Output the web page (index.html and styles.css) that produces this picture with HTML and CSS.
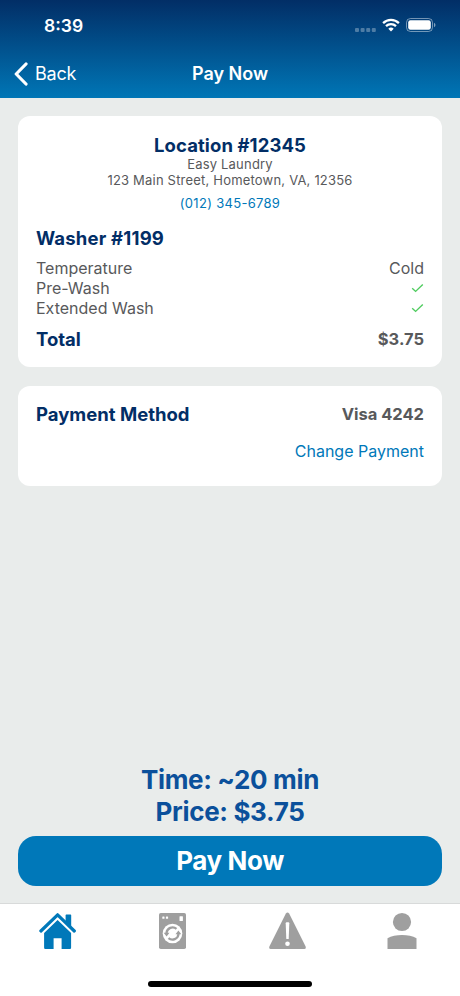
FILE: index.html
```html
<!DOCTYPE html>
<html lang="en">
<head>
  <meta charset="UTF-8">
  <meta name="viewport" content="width=device-width, initial-scale=1">
  <title>Pay Now</title>
  <link rel="stylesheet" href="styles.css">
</head>
<body>

  <header class="header">
    <div class="status-bar">
      <span class="time">8:39</span>
      <div class="status-icons">
        <svg class="signal" width="21" height="4" viewBox="0 0 21 4">
          <rect x="0" y="0" width="4" height="4" rx="1"/>
          <rect x="5.6" y="0" width="4" height="4" rx="1"/>
          <rect x="11.2" y="0" width="4" height="4" rx="1"/>
          <rect x="16.8" y="0" width="4" height="4" rx="1"/>
        </svg>
        <svg class="wifi" width="18" height="14" viewBox="0 0 18 14">
          <path d="M1.1 5.1a11.4 11.4 0 0 1 15.8 0M4 8.2a7.2 7.2 0 0 1 10 0" fill="none" stroke="#fff" stroke-width="2.3"/>
          <path d="M6.3 10.8a4 4 0 0 1 5.4 0L9 13.5z" fill="#fff"/>
        </svg>
        <svg class="battery" width="30" height="14" viewBox="0 0 30 14">
          <rect x=".5" y=".5" width="26" height="13" rx="4" fill="none" stroke="#fff" stroke-opacity=".45"/>
          <rect x="2.2" y="2.2" width="22.6" height="9.6" rx="2.2" fill="#fff"/>
          <path d="M28 4.8c2 .8 2 3.6 0 4.4z" fill="#fff" fill-opacity=".5"/>
        </svg>
      </div>
    </div>
    <nav class="nav-bar">
      <a class="back" href="#">
        <svg width="14" height="24" viewBox="0 0 14 24">
          <path d="M12 2L2.2 12L12 22" fill="none" stroke="#fff" stroke-width="3.2" stroke-linecap="round" stroke-linejoin="round"/>
        </svg>
        <span>Back</span>
      </a>
      <h1>Pay Now</h1>
    </nav>
  </header>

  <main class="content">
    <section class="card order">
      <div class="location">
        <h2>Location #12345</h2>
        <p>Easy Laundry</p>
        <p>123 Main Street, Hometown, VA, 12356</p>
        <a class="phone" href="#">(012) 345-6789</a>
      </div>
      <h2 class="machine">Washer #1199</h2>
      <div class="row">
        <span>Temperature</span>
        <span>Cold</span>
      </div>
      <div class="row">
        <span>Pre-Wash</span>
        <svg class="check" width="13" height="10" viewBox="0 0 13 10"><path d="M1.2 5.2L4.6 8.4L11.8 1.4"/></svg>
      </div>
      <div class="row">
        <span>Extended Wash</span>
        <svg class="check" width="13" height="10" viewBox="0 0 13 10"><path d="M1.2 5.2L4.6 8.4L11.8 1.4"/></svg>
      </div>
      <div class="row total">
        <h2>Total</h2>
        <strong>$3.75</strong>
      </div>
    </section>

    <section class="card payment">
      <div class="row">
        <h2>Payment Method</h2>
        <strong>Visa 4242</strong>
      </div>
      <a class="change" href="#">Change Payment</a>
    </section>

    <div class="summary">
      <p>Time: ~20 min</p>
      <p>Price: $3.75</p>
      <button class="pay">Pay Now</button>
    </div>
  </main>

  <footer class="tab-bar">
    <div class="tabs">
      <a class="tab active" href="#" aria-label="Home">
        <svg width="38" height="38" viewBox="-.6 0 38 38">
          <path d="M27 10V3.4c0-.6.4-1 1-1h3.6c.6 0 1 .4 1 1V15z"/>
          <path d="M2.3 19L19 2.8L35.7 19" fill="none" stroke="currentColor" stroke-width="3.2" stroke-linecap="round" stroke-linejoin="round"/>
          <path d="M19 8L32.5 21v14.5c0 1-.6 1.5-1.5 1.5h-8V26.2h-8V37H7c-.9 0-1.5-.5-1.5-1.5V21z"/>
        </svg>
      </a>
      <a class="tab" href="#" aria-label="Machines">
        <svg width="38" height="38" viewBox="-.5 0 38 38">
          <rect x="5.5" y="1" width="27" height="36" rx="1.8"/>
          <g fill="#fff">
            <rect x="8.8" y="4.6" width="2.2" height="2.2" rx=".5"/>
            <rect x="12.4" y="4.6" width="2.2" height="2.2" rx=".5"/>
            <rect x="26" y="4.2" width="3.4" height="4.8" rx=".5"/>
            <circle cx="19" cy="21.5" r="9.8"/>
          </g>
          <path d="M13 21a6.1 6.1 0 0 1 10-4.2M25 22a6.1 6.1 0 0 1-10 4.2" fill="none" stroke="currentColor" stroke-width="2.3"/>
          <path d="M10.2 20.8h5.8l-2.9 3.6zM27.8 22.2H22l2.9-3.6z"/>
        </svg>
      </a>
      <a class="tab" href="#" aria-label="Alerts">
        <svg width="38" height="38" viewBox="-.5 0 38 38">
          <path d="M17.4 1.6Q19 -.4 20.6 1.6L37.1 34.6Q37.8 36.9 35.8 37H2.2Q.2 36.9.9 34.6z"/>
          <path d="M17.2 11.3Q17.2 10.3 18.2 10.3H19.8Q20.8 10.3 20.8 11.3L20.2 27H17.8z" fill="#fff"/>
          <circle cx="19" cy="31.7" r="2.3" fill="#fff"/>
        </svg>
      </a>
      <a class="tab" href="#" aria-label="Profile">
        <svg width="38" height="38" viewBox="0 0 38 38">
          <circle cx="19" cy="10" r="9.1"/>
          <path d="M4.5 26.2C12 22 26 22 33.5 26.2V37h-29z"/>
        </svg>
      </a>
    </div>
    <div class="home-indicator"></div>
  </footer>

</body>
</html>
```
FILE: styles.css
```css
* {
  box-sizing: border-box;
}

body {
  display: flex;
  flex-direction: column;
  height: 996px;
  margin: 0;
  background-color: #e9eceb;
  color: #58595b;
  font-family: Inter, "Liberation Sans", sans-serif;
}

h1, h2, p {
  margin: 0;
}

a {
  color: #0078b9;
  text-decoration: none;
}

svg {
  display: block;
}

.header {
  height: 98px;
  background: linear-gradient(#022e66, #0076b6);
  color: white;
}

.status-bar {
  display: flex;
  justify-content: space-between;
  height: 50px;
  padding: 15px 24px 0 44px;
}

.time {
  font-size: 17.5px;
  font-weight: 600;
  line-height: 22px;
}

.status-icons {
  display: flex;
  gap: 6px;
  padding-top: 3px;
}

.signal {
  margin-top: 10px;
  fill: rgba(255, 255, 255, 0.3);
}

.nav-bar {
  display: grid;
  grid-template-columns: 1fr auto 1fr;
  align-items: center;
  height: 47px;
  padding: 0 14px;
}

.nav-bar h1 {
  font-size: 18px;
  font-weight: 600;
}

.back {
  display: flex;
  align-items: center;
  gap: 7px;
  color: white;
  font-size: 18px;
  letter-spacing: -0.2px;
}

.content {
  display: flex;
  flex: 1;
  flex-direction: column;
  gap: 18.5px;
  padding: 18px 18px 17.5px;
}

.card {
  padding: 18px;
  border-radius: 12px;
  background: white;
}

.card h2 {
  color: #022e66;
  font-size: 18.5px;
  font-weight: 700;
  line-height: 22px;
}

.order {
  height: 251px;
}

.location {
  font-size: 13px;
  letter-spacing: 0.2px;
  line-height: 16px;
  text-align: center;
}

.location h2 {
  letter-spacing: 0.1px;
}

.phone {
  display: block;
  margin-top: 7px;
  letter-spacing: 0.3px;
}

.order .machine {
  margin: 16px 0 9px;
  letter-spacing: 0.2px;
}

.row {
  display: flex;
  align-items: center;
  justify-content: space-between;
  font-size: 16px;
  line-height: 20px;
}

.row strong {
  font-size: 16.5px;
}

.check {
  fill: none;
  stroke: #50cc60;
  stroke-width: 1.4;
}

.total {
  margin-top: 10px;
}

.payment {
  height: 100.5px;
  padding-top: 17px;
}

.change {
  display: block;
  margin-top: 16px;
  font-size: 16px;
  line-height: 20px;
  text-align: right;
}

.summary {
  margin-top: auto;
  color: #0b509b;
  font-size: 26px;
  font-weight: 700;
  letter-spacing: -0.35px;
  line-height: 32px;
  text-align: center;
}

.pay {
  display: block;
  width: 100%;
  height: 50px;
  margin-top: 7.5px;
  border: none;
  border-radius: 18px;
  background-color: #0078b9;
  color: white;
  font: 700 26px Inter, "Liberation Sans", sans-serif;
  letter-spacing: -0.4px;
}

.tab-bar {
  display: flex;
  flex-direction: column;
  align-items: center;
  justify-content: space-between;
  height: 93px;
  padding: 8px 0 9px;
  border-top: 1px solid #d8dada;
  background: white;
}

.tabs {
  display: flex;
  width: 100%;
  padding-right: 1px;
}

.tab {
  display: flex;
  flex: 1;
  justify-content: center;
  color: #9f9f9f;
  fill: currentColor;
}

.active {
  color: #0078b9;
}

.home-indicator {
  width: 164px;
  height: 6px;
  border-radius: 3px;
  background: black;
}
```
